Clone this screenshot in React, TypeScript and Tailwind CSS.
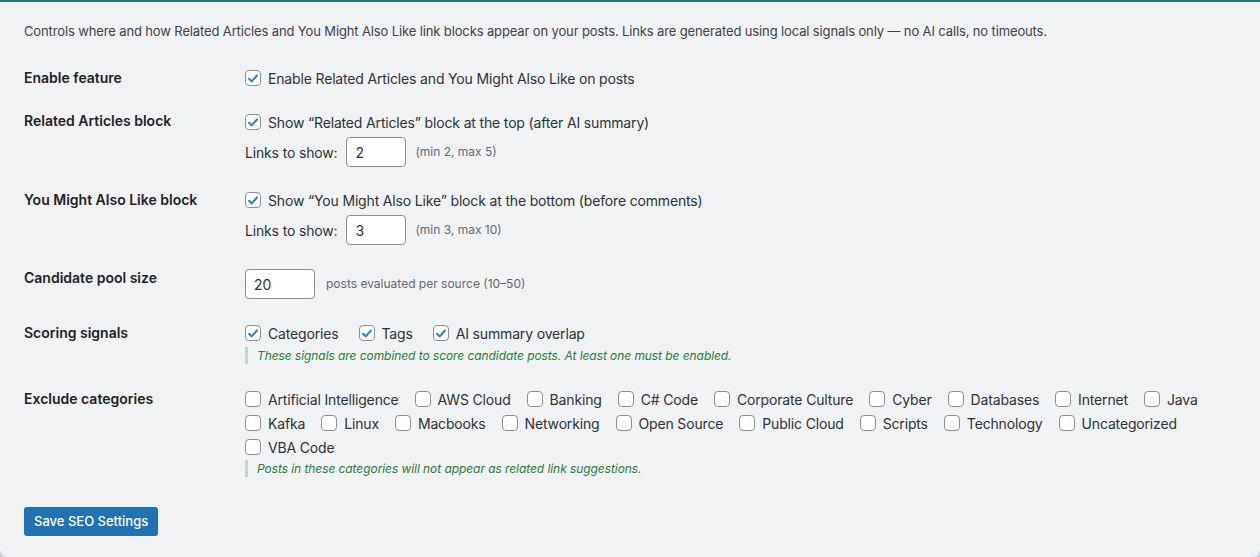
import type { ReactNode } from "react";

const categories = [
  "Artificial Intelligence",
  "AWS Cloud",
  "Banking",
  "C# Code",
  "Corporate Culture",
  "Cyber",
  "Databases",
  "Internet",
  "Java",
  "Kafka",
  "Linux",
  "Macbooks",
  "Networking",
  "Open Source",
  "Public Cloud",
  "Scripts",
  "Technology",
  "Uncategorized",
  "VBA Code",
];

function Box({ checked }: { checked?: boolean }) {
  return (
    <span className="flex h-4 w-4 shrink-0 items-center justify-center rounded-[4px] border border-[#8c8f94] bg-white">
      {checked && (
        <svg viewBox="0 0 16 16" className="h-[15px] w-[15px]">
          <path d="M3.5 8.3 L6.6 11.3 L12.5 4.5" fill="none" stroke="#3582c4" strokeWidth="2.4" strokeLinecap="round" strokeLinejoin="round" />
        </svg>
      )}
    </span>
  );
}

function Check({ label, checked }: { label: string; checked?: boolean }) {
  return (
    <label className="flex h-5 items-center gap-[7px] text-[14px] tracking-[-0.16px] text-[#2c3338]">
      <Box checked={checked} />
      <span>{label}</span>
    </label>
  );
}

function Num({ value, wide }: { value: string; wide?: boolean }) {
  return (
    <span
      className={`flex h-[30px] ${wide ? "w-[70px]" : "w-[60px]"} items-center rounded-[4px] border border-[#8c8f94] bg-white px-[8px] text-[14px] text-[#2c3338]`}
    >
      {value}
    </span>
  );
}

function Note({ children }: { children: ReactNode }) {
  return (
    <p className="border-l-[3px] border-[#b5dfbf] pl-[9px] text-[12px] leading-[17px] tracking-[-0.07px] italic text-[#2b7a3c]">
      {children}
    </p>
  );
}

function Row({ label, children, className = "" }: { label: string; children: ReactNode; className?: string }) {
  return (
    <div className={`flex ${className}`}>
      <div className="w-[221px] shrink-0 text-[14px] leading-5 font-semibold text-[#1d2327]">{label}</div>
      <div className="flex flex-1 flex-col">{children}</div>
    </div>
  );
}

function LinksToShow({ value, hint }: { value: string; hint: string }) {
  return (
    <div className="mt-[5px] flex items-center gap-[9px] text-[14px] tracking-[-0.16px] text-[#2c3338]">
      <span>Links to show:</span>
      <Num value={value} />
      <span className="text-[12px] tracking-normal text-[#646970]">{hint}</span>
    </div>
  );
}

export default function App() {
  return (
    <div className="min-h-screen bg-[#c9d4e4] font-['Inter','Liberation_Sans',sans-serif]">
      <div className="h-[557px] rounded-b-[8px] border-t-2 border-[#2e6e86] bg-[#f1f2f4] px-6 pt-[20px]">
        <p className="text-[13px] leading-[18px] tracking-[-0.13px] text-[#3c434a]">
          Controls where and how Related Articles and You Might Also Like link blocks appear on your posts. Links are generated using local signals only — no AI calls, no timeouts.
        </p>

        <div className="mt-[28px] flex flex-col">
          <Row label="Enable feature">
            <Check checked label="Enable Related Articles and You Might Also Like on posts" />
          </Row>

          <Row label="Related Articles block" className="mt-[23px]">
            <div className="mt-[1px]">
              <Check checked label="Show “Related Articles” block at the top (after AI summary)" />
            </div>
            <LinksToShow value="2" hint="(min 2, max 5)" />
          </Row>

          <Row label="You Might Also Like block" className="mt-[23px]">
            <Check checked label="Show “You Might Also Like” block at the bottom (before comments)" />
            <LinksToShow value="3" hint="(min 3, max 10)" />
          </Row>

          <Row label="Candidate pool size" className="mt-[23px]">
            <div className="mt-[1px] flex items-center gap-[11px]">
              <Num value="20" wide />
              <span className="text-[12px] text-[#646970]">posts evaluated per source (10–50)</span>
            </div>
          </Row>

          <Row label="Scoring signals" className="mt-[24px]">
            <div className="flex gap-5">
              <Check checked label="Categories" />
              <Check checked label="Tags" />
              <Check checked label="AI summary overlap" />
            </div>
            <div className="mt-[4px]">
              <Note>These signals are combined to score candidate posts. At least one must be enabled.</Note>
            </div>
          </Row>

          <Row label="Exclude categories" className="mt-[25px]">
            <div className="flex flex-wrap gap-x-4 gap-y-1">
              {categories.map((c) => (
                <Check key={c} label={c} />
              ))}
            </div>
            <div className="mt-[3px]">
              <Note>Posts in these categories will not appear as related link suggestions.</Note>
            </div>
          </Row>
        </div>

        <button className="mt-[30px] h-[29px] rounded-[3px] bg-[#2271b1] px-[10px] text-[13px] font-medium text-white">
          Save SEO Settings
        </button>
      </div>
    </div>
  );
}
